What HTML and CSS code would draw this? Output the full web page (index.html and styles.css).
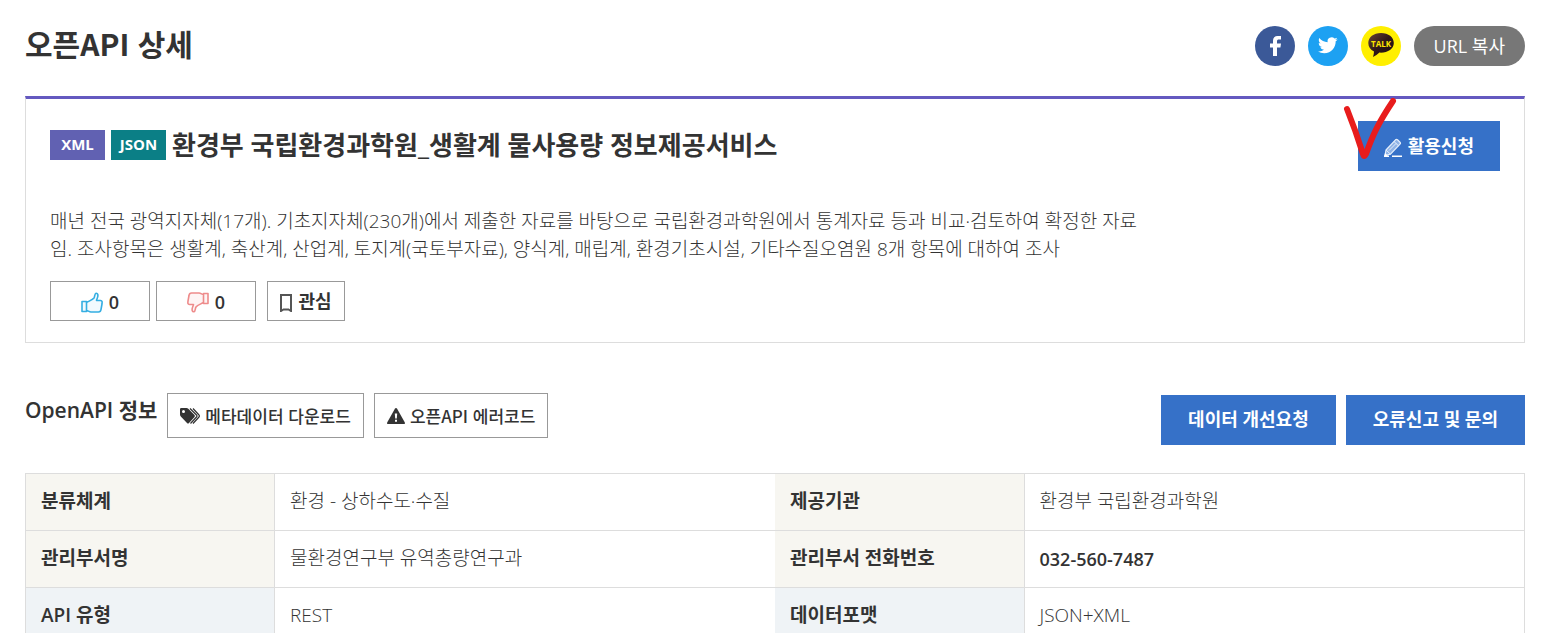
FILE: index.html
```html
<!DOCTYPE html>
<html lang="ko">
<head>
<meta charset="utf-8">
<title>오픈API 상세</title>
<link rel="stylesheet" href="styles.css">
</head>
<body>
<main class="page">
  <header class="page-head">
    <h1 class="page-title">오픈API 상세</h1>
    <div class="share">
      <a class="share-link facebook" href="#" aria-label="페이스북">
        <svg viewBox="0 0 40 40"><path fill="#fff" d="M18 30V21.500H15V17.500H18V14.800C18 11.800 19.800 10 22.600 10H26V13.600H23.900C22.600 13.600 22 14.200 22 15.300V17.500H26L25.400 21.500H22V30Z"/></svg>
      </a>
      <a class="share-link twitter" href="#" aria-label="트위터">
        <svg viewBox="0 0 40 40"><path fill="#fff" transform="translate(10 9.500) scale(.82)" d="M23.950 4.570a10 10 0 0 1-2.820.770 4.960 4.960 0 0 0 2.160-2.720c-.95.550-2 .950-3.130 1.180a4.920 4.920 0 0 0-8.380 4.480C7.690 8.090 4.070 6.130 1.640 3.160a4.820 4.820 0 0 0-.67 2.480c0 1.710.870 3.210 2.190 4.100a4.900 4.900 0 0 1-2.230-.62v.060a4.920 4.920 0 0 0 3.950 4.830 5 5 0 0 1-2.210.080 4.940 4.940 0 0 0 4.600 3.420A9.870 9.870 0 0 1 0 19.540a14 14 0 0 0 7.550 2.210c9.050 0 14-7.500 14-13.980 0-.21 0-.42-.02-.63a9.940 9.940 0 0 0 2.460-2.550z"/></svg>
      </a>
      <a class="share-link kakao" href="#" aria-label="카카오톡">
        <svg viewBox="0 0 40 40"><defs><linearGradient id="bean" x1="0" y1="0" x2="1" y2="1"><stop offset="0" stop-color="#6a4437"/><stop offset=".5" stop-color="#2f1818"/><stop offset="1" stop-color="#1c0c10"/></linearGradient></defs><path fill="url(#bean)" d="M20 7C12.500 7 7.300 11.300 7.300 17C7.300 20.700 9.500 23.700 13 25.400C12.900 27.300 12.600 29.200 12 30.900C14.400 29.900 16.600 28.400 18.400 26.600C26.500 27.100 32.800 23 32.800 17C32.800 11.300 27.500 7 20 7Z"/><text class="talk" x="20" y="20.500" text-anchor="middle">TALK</text></svg>
      </a>
      <button class="url-copy" type="button">URL 복사</button>
    </div>
  </header>

  <section class="summary">
    <div class="summary-head">
      <div class="summary-name">
        <span class="tag xml">XML</span>
        <span class="tag json">JSON</span>
        <h2 class="name">환경부 국립환경과학원_생활계 물사용량 정보제공서비스</h2>
      </div>
      <div class="apply-wrap">
        <button class="btn-blue apply" type="button">
          <svg class="pencil" viewBox="0 0 18 19"><path fill="#8fb3e6" stroke="#e6effb" stroke-width="1.200" stroke-linejoin="round" d="M1 17.500L2 12L11.500 1.800Q12.500 1 13.500 1.800L16 4.200Q17 5.200 16 6.200L6.500 16.200Z"/><path fill="none" stroke="#e6effb" d="M2 12L6.500 16.200M10 3.500L14.500 7.800M5 12.500L12 5.500"/><path fill="#fff" d="M0 19L1 15L4 18Z"/><path stroke="#fff" stroke-width="1.500" d="M0 18.200H5M8 18.200H18"/></svg>
          <span>활용신청</span>
        </button>
        <svg class="check" viewBox="0 0 60 66" aria-hidden="true"><path d="M6 11C12 26 17 40 22 56Q23 60 25 56C32 36 38 24 52 3" fill="none" stroke="#e81c1c" stroke-width="6" stroke-linecap="round" stroke-linejoin="round"/></svg>
      </div>
    </div>
    <p class="desc">매년 전국 광역지자체(17개). 기초지자체(230개)에서 제출한 자료를 바탕으로 국립환경과학원에서 통계자료 등과 비교·검토하여 확정한 자료<br>임. 조사항목은 생활계, 축산계, 산업계, 토지계(국토부자료), 양식계, 매립계, 환경기초시설, 기타수질오염원 8개 항목에 대하여 조사</p>
    <div class="reactions">
      <button class="react vote" type="button" aria-label="추천 0">
        <svg class="thumb up" viewBox="0 0 22 21"><path d="M1 9.500H5.500V19.500H1ZM5.500 10.500C8 9 11.500 8 13 6C14 4.500 13.500 1.500 15 1.200C17 1 17 3 16.800 4.500C16.600 6 15.500 7.500 15.500 8.500H19.500C21.500 8.700 21.200 10 21 12L20 17.500C19.700 19.500 19 20 17.500 20H10C8 20 7 18.500 5.500 18.500"/></svg>
        <span>0</span>
      </button>
      <button class="react vote" type="button" aria-label="비추천 0">
        <svg class="thumb down" viewBox="0 0 22 21"><path d="M21 1.500H16.500V11.500H21ZM16.500 10.500C14 12 10.500 13 9 15C8 16.500 8.500 19.500 7 19.800C5 20 5 18 5.200 16.500C5.400 15 6.500 13.500 6.500 12.500H2.500C.5 12.300 .8 11 1 9L2 3.500C2.300 1.500 3 1 4.500 1H12C14 1 15 2.500 16.500 2.500"/></svg>
        <span>0</span>
      </button>
      <button class="react favorite" type="button">
        <svg class="bookmark" viewBox="0 0 12 18"><path d="M1 1H11V17L8.500 15.500H3.500L1 17Z"/></svg>
        <span>관심</span>
      </button>
    </div>
  </section>

  <div class="info-head">
    <h3 class="info-title">OpenAPI 정보</h3>
    <button class="btn-line" type="button">
      <svg class="tags" viewBox="0 0 20 16"><path fill="#333" fill-rule="evenodd" d="M0 1.200Q0 0 1.200 0H6.500Q7.500 0 8.300 .8L14.500 7Q15.400 8 14.500 9L9 15Q8 16 7 15L.8 8.500Q0 7.600 0 6.500ZM3.500 2A1.500 1.500 0 1 0 3.500 5A1.500 1.500 0 1 0 3.500 2Z"/><path fill="none" stroke="#333" stroke-width="1.200" d="M10 .5L16.500 7Q17.500 8 16.500 9L10.500 15.500M13 .5L19 7Q19.800 8 19 9L13 15.500"/></svg>
      <span>메타데이터 다운로드</span>
    </button>
    <button class="btn-line" type="button">
      <svg class="warn" viewBox="0 0 18 16"><path fill="#333" d="M9 0Q9.700 0 10.100 .7L17.700 14.200Q18.500 16 16.800 16H1.200Q-.5 16 .3 14.200L7.900 .7Q8.300 0 9 0Z"/><path fill="#fff" d="M7.800 5.500H10.200L9.800 10.500H8.200ZM8 11.700H10V13.700H8Z"/></svg>
      <span>오픈API 에러코드</span>
    </button>
    <div class="info-actions">
      <button class="btn-blue" type="button">데이터 개선요청</button>
      <button class="btn-blue" type="button">오류신고 및 문의</button>
    </div>
  </div>

  <table class="info">
    <tbody>
      <tr><th scope="row">분류체계</th><td>환경 - 상하수도·수질</td><th scope="row">제공기관</th><td>환경부 국립환경과학원</td></tr>
      <tr><th scope="row">관리부서명</th><td>물환경연구부 유역총량연구과</td><th scope="row">관리부서 전화번호</th><td class="strong">032-560-7487</td></tr>
      <tr class="tech"><th scope="row">API 유형</th><td>REST</td><th scope="row">데이터포맷</th><td>JSON+XML</td></tr>
    </tbody>
  </table>
</main>
</body>
</html>
```
FILE: styles.css
```css
* { box-sizing: border-box; }
html { scrollbar-width: none; }
body {
  margin: 0;
  background: #fff;
  color: #333;
  font-family: "Open Sans", "Noto Sans CJK KR", sans-serif;
  font-size: 19px;
  line-height: 28px;
}
h1, h2, h3, p { margin: 0; }
button { font-family: inherit; cursor: pointer; }
svg { display: block; flex: none; }

.page { padding: 24px 30px 0 25px; }

.page-head { display: flex; justify-content: space-between; height: 72px; }
.page-title {
  font-family: "Noto Sans CJK KR", sans-serif;
  font-size: 30px;
  font-weight: 600;
  line-height: 38px;
}
.share { display: flex; gap: 13px; padding-top: 2px; }
.share-link { width: 40px; height: 40px; border-radius: 50%; }
.facebook { background: #3b5998; }
.twitter { background: #1da1f2; }
.kakao { background: #ffef00; }
.talk { font: 700 8px "Open Sans", sans-serif; fill: #ffe600; }
.url-copy {
  height: 40px;
  padding: 0 20px 3px;
  border: 0;
  border-radius: 20px;
  background: #777;
  color: #fff;
  font-size: 18px;
}

.summary {
  padding: 22px 24px 21px;
  border: 1px solid #ddd;
  border-top: 3px solid #6459c0;
}
.summary-head { display: flex; justify-content: space-between; }
.summary-name { display: flex; gap: 6px; padding-top: 9px; height: 40px; }
.tag {
  width: 55px;
  height: 30px;
  color: #fff;
  font-size: 15px;
  font-weight: 700;
  line-height: 28px;
  text-align: center;
}
.xml { background: #6161b2; }
.json { background: #0b7f86; }
.name { font-size: 26px; font-weight: 600; line-height: 30px; }
.btn-blue {
  height: 50px;
  padding: 0 27px 4px;
  border: 0;
  background: #3671c8;
  color: #fff;
  font-size: 18px;
  font-weight: 700;
}
.apply-wrap { position: relative; }
.apply { display: flex; align-items: center; gap: 6px; padding: 0 26px 2px; }
.pencil { width: 18px; height: 19px; margin-top: 5px; }
.check { position: absolute; left: -17px; top: -23px; width: 60px; height: 66px; }
.desc { margin-top: 36px; font-weight: 300; }
.reactions { display: flex; gap: 6px; margin-top: 18px; }
.react {
  display: flex;
  align-items: center;
  justify-content: center;
  gap: 6px;
  height: 40px;
  padding: 2px 0 0;
  border: 1px solid #999;
  background: #fff;
  color: #333;
  font-size: 18px;
  font-weight: 600;
}
.vote { width: 100px; }
.favorite { width: 78px; margin-left: 5px; padding: 0 0 2px; }
.thumb { width: 22px; height: 21px; fill: #f2fafe; stroke: #35aee2; stroke-width: 1.6; stroke-linejoin: round; }
.down { fill: #fef4f4; stroke: #ee8b8b; }
.bookmark { width: 12px; height: 18px; margin-top: 5px; fill: #fff; stroke: #555; stroke-width: 2; }

.info-head { display: flex; align-items: flex-start; gap: 10px; margin-top: 50px; }
.info-title { font-size: 21px; font-weight: 600; line-height: 34px; }
.btn-line {
  display: flex;
  align-items: center;
  gap: 5px;
  height: 45px;
  padding: 0 12px;
  border: 1px solid #999;
  background: #fff;
  color: #333;
  font-family: "Noto Sans CJK KR", sans-serif;
  font-size: 17px;
  font-weight: 500;
}
.tags { width: 20px; height: 16px; }
.warn { width: 18px; height: 16px; }
.info-actions { display: flex; gap: 10px; margin: 2px 0 0 auto; }

.info {
  width: 100%;
  margin-top: 28px;
  border-collapse: collapse;
  table-layout: fixed;
  border: 1px solid #ddd;
}
.info th, .info td {
  height: 57px;
  padding: 0 15px 2px;
  border-bottom: 1px solid #ddd;
  text-align: left;
}
.info th { width: 249px; border-right: 1px solid #ddd; background: #f7f6f1; font-weight: 600; }
.info td { font-weight: 300; }
.info .tech th { background: #eff3f6; }
.info .strong { padding-bottom: 0; font-size: 18px; font-weight: 600; }
```
